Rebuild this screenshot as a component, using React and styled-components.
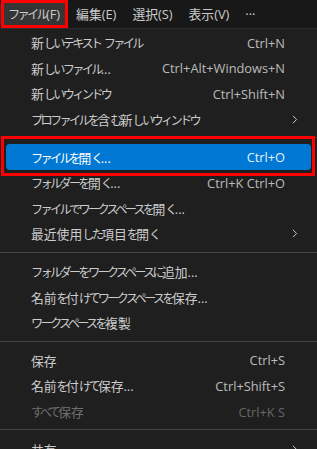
import React from "react"
import styled, { createGlobalStyle } from "styled-components"

const GlobalStyle = createGlobalStyle`
  html, body {
    margin: 0;
    padding: 0;
    background: #1f1f1f;
    overflow: hidden;
  }
  body {
    font-family: "Open Sans", "Noto Sans CJK JP", sans-serif;
    -webkit-font-smoothing: antialiased;
  }
`

const menuBar = [
  { label: "ファイル(F)", open: true },
  { label: "編集(E)" },
  { label: "選択(S)" },
  { label: "表示(V)" },
  { label: "···" },
]

const items = [
  { label: "新しいテキスト ファイル", keys: "Ctrl+N" },
  { label: "新しいファイル...", keys: "Ctrl+Alt+Windows+N" },
  { label: "新しいウィンドウ", keys: "Ctrl+Shift+N" },
  { label: "プロファイルを含む新しいウィンドウ", sub: true },
  { sep: true },
  { label: "ファイルを開く...", keys: "Ctrl+O", active: true },
  { label: "フォルダーを開く...", keys: "Ctrl+K Ctrl+O" },
  { label: "ファイルでワークスペースを開く..." },
  { label: "最近使用した項目を開く", sub: true },
  { sep: true },
  { label: "フォルダーをワークスペースに追加..." },
  { label: "名前を付けてワークスペースを保存..." },
  { label: "ワークスペースを複製" },
  { sep: true },
  { label: "保存", keys: "Ctrl+S" },
  { label: "名前を付けて保存...", keys: "Ctrl+Shift+S" },
  { label: "すべて保存", keys: "Ctrl+K S", disabled: true },
  { sep: true },
  { label: "共有", sub: true },
]

const KANA = /([\u3040-\u30ff]+)/

function JaText({ children }) {
  return children
    .split(KANA)
    .map((part, i) => (KANA.test(part) ? <Kana key={i}>{part}</Kana> : part))
}

export default function App() {
  return (
    <>
      <GlobalStyle />
      <Bar>
        {menuBar.map((m) => (
          <BarItem key={m.label} $open={m.open}>
            <JaText>{m.label}</JaText>
          </BarItem>
        ))}
      </Bar>
      <Menu>
        {items.map((it, i) =>
          it.sep ? (
            <Separator key={i} />
          ) : (
            <Row key={i} $active={it.active} $disabled={it.disabled}>
              <Label>
                <JaText>{it.label}</JaText>
              </Label>
              {it.keys && <Keys>{it.keys}</Keys>}
              {it.sub && (
                <Chevron width="6" height="9" viewBox="0 0 6 9">
                  <polyline points="1,0.8 4.6,4.5 1,8.2" />
                </Chevron>
              )}
            </Row>
          )
        )}
      </Menu>
    </>
  )
}

const Kana = styled.span`
  font-size: 12.2px;
  letter-spacing: -2.7px;
`

const Bar = styled.div`
  height: 28px;
  display: flex;
  align-items: center;
  background: #181818;
`

const BarItem = styled.div`
  position: relative;
  height: 24px;
  line-height: 24px;
  padding: 0 8px;
  border-radius: 4px;
  font-size: 12.8px;
  color: #cccccc;
  white-space: nowrap;
  background: ${(p) => (p.$open ? "#353535" : "transparent")};

  &::after {
    content: "";
    display: ${(p) => (p.$open ? "block" : "none")};
    position: absolute;
    top: -2px;
    bottom: -2px;
    left: 1px;
    right: 0;
    border: 3px solid #ff0000;
  }
`

const Menu = styled.div`
  background: #1f1f1f;
  border-top: 1px solid #2b2b2b;
  padding-top: 1px;
  width: 317px;
  box-sizing: border-box;
`

const Row = styled.div`
  position: relative;
  display: flex;
  align-items: center;
  height: 25.6px;
  margin: 0 6px;
  padding: 0 26px 0 25px;
  border-radius: 4px;
  font-size: 12.8px;
  white-space: nowrap;
  color: ${(p) => (p.$active ? "#ffffff" : p.$disabled ? "#6f6f6f" : "#cccccc")};
  background: ${(p) => (p.$active ? "#0078d4" : "transparent")};

  &::after {
    content: "";
    display: ${(p) => (p.$active ? "block" : "none")};
    position: absolute;
    top: -8px;
    bottom: -6px;
    left: -5px;
    right: -4px;
    border: 3px solid #ff0000;
  }
`

const Label = styled.span`
  flex: 1;
`

const Keys = styled.span`
  opacity: 0.9;
`

const Chevron = styled.svg`
  margin-right: -13px;
  fill: none;
  stroke: currentColor;
  stroke-width: 1;
`

const Separator = styled.div`
  height: 1px;
  margin: 5px 0 6px;
  background: #454545;
`
